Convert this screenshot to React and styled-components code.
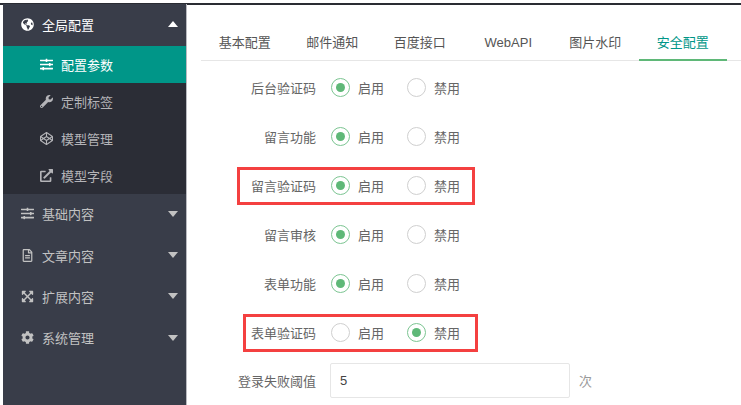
import React from 'react'
import styled, { createGlobalStyle } from 'styled-components'
import { FaGlobeAmericas, FaSlidersH, FaWrench, FaCodepen, FaExternalLinkAlt, FaRegFileAlt, FaExpandArrowsAlt, FaCog } from 'react-icons/fa'

const GlobalStyle = createGlobalStyle`
    html, body {
        margin: 0;
        height: 100%;
        background: #fff;
        overflow: hidden;
    }
    #root {
        height: 100%;
    }
    * {
        box-sizing: border-box;
    }
`

const tabs = [
    { text: '基本配置' },
    { text: '邮件通知' },
    { text: '百度接口' },
    { text: 'WebAPI', wide: true },
    { text: '图片水印' },
    { text: '安全配置', active: true },
]

const rows = [
    { label: '后台验证码', on: true },
    { label: '留言功能', on: true },
    { label: '留言验证码', on: true, box: { left: 36, width: 238 } },
    { label: '留言审核', on: true },
    { label: '表单功能', on: true },
    { label: '表单验证码', on: false, box: { left: 42, width: 235 } },
]

const subItems = [
    { icon: <FaSlidersH />, text: '配置参数', active: true },
    { icon: <FaWrench />, text: '定制标签' },
    { icon: <FaCodepen />, text: '模型管理' },
    { icon: <FaExternalLinkAlt />, text: '模型字段' },
]

const groups = [
    { icon: <FaSlidersH />, text: '基础内容' },
    { icon: <FaRegFileAlt />, text: '文章内容' },
    { icon: <FaExpandArrowsAlt />, text: '扩展内容' },
    { icon: <FaCog />, text: '系统管理' },
]

const App = () => {
    return (
        <Page>
            <GlobalStyle />
            <Frame>
                <Sidebar>
                    <GroupHead $first>
                        <GroupIcon><FaGlobeAmericas /></GroupIcon>
                        <span>全局配置</span>
                        <Caret $up />
                    </GroupHead>
                    {subItems.map((item) => (
                        <SubItem key={item.text} $active={item.active}>
                            <SubIcon>{item.icon}</SubIcon>
                            <span>{item.text}</span>
                        </SubItem>
                    ))}
                    {groups.map((g) => (
                        <GroupHead key={g.text}>
                            <GroupIcon>{g.icon}</GroupIcon>
                            <span>{g.text}</span>
                            <Caret />
                        </GroupHead>
                    ))}
                </Sidebar>
                <Main>
                    <Tabs>
                        {tabs.map((t) => (
                            <Tab key={t.text} $active={t.active} $wide={t.wide}>{t.text}</Tab>
                        ))}
                    </Tabs>
                    <Form>
                        {rows.map((r) => (
                            <Row key={r.label}>
                                <Label>{r.label}</Label>
                                <Radio>
                                    <Dot $on={r.on} />
                                    <span>启用</span>
                                </Radio>
                                <Radio>
                                    <Dot $on={!r.on} />
                                    <span>禁用</span>
                                </Radio>
                                {r.box && <Highlight $left={r.box.left} $width={r.box.width} />}
                            </Row>
                        ))}
                        <InputRow>
                            <Label>登录失败阈值</Label>
                            <Input>5</Input>
                            <Unit>次</Unit>
                        </InputRow>
                    </Form>
                </Main>
            </Frame>
        </Page>
    )
}

const Page = styled.div`
    height: 100%;
    padding: 3px 0 0 3px;
    font-family: "Liberation Sans", "Noto Sans CJK SC", sans-serif;
    font-size: 13px;
    color: #666;
`

const Frame = styled.div`
    height: 100%;
    display: flex;
    border-top: 2px solid #2a2c33;
    margin-left: -3px;
    padding-left: 3px;
`

const Sidebar = styled.nav`
    width: 184px;
    flex: none;
    background: #393d49;
    color: #c2c2c2;
    border-right: 1px solid #b9bac0;
    margin-top: -1px;
`

const GroupHead = styled.div`
    height: ${(p) => (p.$first ? '42px' : '41.4px')};
    display: flex;
    align-items: center;
    padding: 0 8px 2px 18px;
    color: ${(p) => (p.$first ? '#fff' : '#c2c2c2')};
    span {
        flex: 1;
    }
`

const GroupIcon = styled.i`
    width: 21px;
    flex: none;
    display: flex;
    font-size: 13px;
`

const SubItem = styled.div`
    height: 37px;
    display: flex;
    align-items: center;
    padding: 0 0 1px 37px;
    background: ${(p) => (p.$active ? '#009688' : '#2b2d36')};
    color: ${(p) => (p.$active ? '#fff' : '#b4b4b8')};
`

const SubIcon = styled.i`
    width: 21px;
    flex: none;
    display: flex;
    font-size: 13px;
`

const Caret = styled.b`
    width: 0;
    height: 0;
    border-left: 5.5px solid transparent;
    border-right: 5.5px solid transparent;
    border-top: ${(p) => (p.$up ? '0' : '6px solid #c2c2c2')};
    border-bottom: ${(p) => (p.$up ? '6px solid #fff' : '0')};
`

const Main = styled.main`
    flex: 1;
    min-width: 0;
    padding-left: 14px;
`

const Tabs = styled.div`
    height: 56px;
    display: flex;
    align-items: flex-end;
    border-bottom: 1px solid #e6e6e6;
`

const Tab = styled.div`
    height: 37px;
    padding: ${(p) => (p.$wide ? '0 19.5px 0 21px' : '0 17.75px')};
    margin-bottom: -1px;
    line-height: 37px;
    color: ${(p) => (p.$active ? '#009688' : '#555')};
    border-bottom: 2px solid ${(p) => (p.$active ? '#5fb878' : 'transparent')};
`

const Form = styled.div`
    display: flex;
    flex-direction: column;
    padding-top: 2px;
`

const Row = styled.div`
    position: relative;
    height: 49px;
    display: flex;
    align-items: center;
`

const InputRow = styled(Row)`
    margin-top: -1px;
`

const Label = styled.label`
    width: 115px;
    flex: none;
    text-align: right;
    margin-right: 15px;
`

const Radio = styled.div`
    width: 76px;
    flex: none;
    display: flex;
    align-items: center;
    gap: 8px;
`

const Dot = styled.i`
    width: 19px;
    height: 19px;
    flex: none;
    border-radius: 50%;
    border: 1.5px solid ${(p) => (p.$on ? '#7cc592' : '#cfcfcf')};
    display: flex;
    align-items: center;
    justify-content: center;
    &::after {
        content: '';
        width: 9px;
        height: 9px;
        border-radius: 50%;
        background: ${(p) => (p.$on ? '#5fb878' : 'transparent')};
    }
`

const Highlight = styled.div`
    position: absolute;
    top: 6px;
    left: ${(p) => p.$left}px;
    width: ${(p) => p.$width}px;
    height: 38px;
    border: 3px solid #f44040;
    pointer-events: none;
`

const Input = styled.div`
    width: 240px;
    height: 35px;
    flex: none;
    margin: -1px 0 0 -1px;
    padding: 0 9px;
    line-height: 33px;
    border: 1px solid #e6e6e6;
    border-radius: 2px;
    color: #444;
`

const Unit = styled.span`
    margin-left: 9px;
    color: #999;
`

export default App
